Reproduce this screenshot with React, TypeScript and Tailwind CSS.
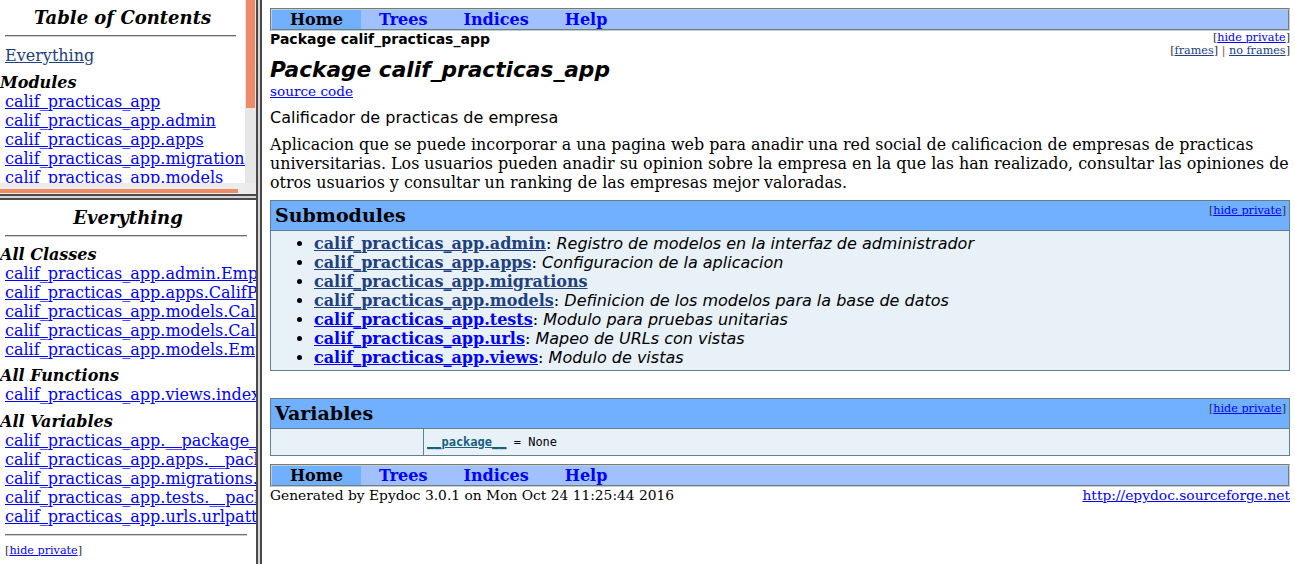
import React from "react";

const serif = "font-['DejaVu_Serif',serif]";

function Hr({ className = "" }: { className?: string }) {
  return <div className={"h-0 border-t border-b border-t-[#6e6e6e] border-b-[#cfcfcf] " + className} />;
}

function TocLink({ children, visited = false }: { children: React.ReactNode; visited?: boolean }) {
  return (
    <div className="whitespace-nowrap pl-[5px] text-[16px] leading-[19px]">
      <a className={visited ? "text-[#204080] underline" : "text-[#0000ff] underline"} href="#">
        {children}
      </a>
    </div>
  );
}

function TocHead({ children, className = "" }: { children: React.ReactNode; className?: string }) {
  return <div className={"whitespace-nowrap text-[16px] leading-[19px] font-bold italic " + className}>{children}</div>;
}

function NavBar() {
  return (
    <div className="flex border-2 [border-style:groove] border-[#c0d0d0] bg-[#a0c0ff] text-[16px] leading-[19px] font-bold">
      <div className="bg-[#70b0ff] px-[18px] text-black">Home</div>
      <div className="px-[18px] text-[#0000ff]">Trees</div>
      <div className="px-[18px] text-[#0000ff]">Indices</div>
      <div className="px-[18px] text-[#0000ff]">Help</div>
    </div>
  );
}

function Options({ children, className = "" }: { children: React.ReactNode; className?: string }) {
  return <div className={"whitespace-nowrap text-[11.2px] leading-[13px] text-[#333] " + className}>{children}</div>;
}

const submodules: { name: string; desc: string; visited: boolean }[] = [
  { name: "calif_practicas_app.admin", desc: "Registro de modelos en la interfaz de administrador", visited: true },
  { name: "calif_practicas_app.apps", desc: "Configuracion de la aplicacion", visited: true },
  { name: "calif_practicas_app.migrations", desc: "", visited: true },
  { name: "calif_practicas_app.models", desc: "Definicion de los modelos para la base de datos", visited: true },
  { name: "calif_practicas_app.tests", desc: "Modulo para pruebas unitarias", visited: false },
  { name: "calif_practicas_app.urls", desc: "Mapeo de URLs con vistas", visited: false },
  { name: "calif_practicas_app.views", desc: "Modulo de vistas", visited: false },
];

export default function App() {
  return (
    <div className={"flex h-[564px] w-[1295px] overflow-hidden bg-white text-black " + serif}>
      {/* Left column (two frames) */}
      <div className="flex w-[256px] shrink-0 flex-col">
        {/* Top-left frame: Table of contents */}
        <div className="relative h-[194px] shrink-0 overflow-hidden">
          <div className="w-[245px] pt-[7px]">
            <div className="text-center text-[18px] leading-[21px] font-bold italic">Table of Contents</div>
            <Hr className="ml-[5px] mr-[9px] mt-[7px] mb-[9px]" />
            <TocLink visited>Everything</TocLink>
            <TocHead className="mt-[8px]">Modules</TocHead>
            <TocLink>calif_practicas_app</TocLink>
            <TocLink>calif_practicas_app.admin</TocLink>
            <TocLink>calif_practicas_app.apps</TocLink>
            <TocLink>calif_practicas_app.migrations</TocLink>
            <TocLink>calif_practicas_app.models</TocLink>
            <TocLink>calif_practicas_app.tests</TocLink>
            <TocLink>calif_practicas_app.urls</TocLink>
            <TocLink>calif_practicas_app.views</TocLink>
          </div>
          {/* vertical scrollbar */}
          <div className="absolute right-0 top-0 h-[183px] w-[11px] bg-[#e6e6e6]">
            <div className="ml-[1px] h-[108px] w-[9px] bg-[#ee8a66]" />
          </div>
          {/* horizontal scrollbar */}
          <div className="absolute bottom-0 left-0 h-[11px] w-[245px] bg-[#ececec]">
            <div className="absolute bottom-[1px] left-0 h-[4px] w-[238px] bg-[#ee8a66]" />
          </div>
          <div className="absolute bottom-0 right-0 h-[11px] w-[11px] bg-[#ebebeb]" />
        </div>
        {/* horizontal frame divider */}
        <div className="h-[6px] shrink-0 border-t-2 border-b-2 border-[#4a4a4a] bg-[#d6d6d6]" />
        {/* Bottom-left frame: Everything */}
        <div className="flex-1 overflow-hidden pt-[7px]">
          <div className="text-center text-[18px] leading-[21px] font-bold italic">Everything</div>
          <Hr className="ml-[5px] mr-[9px] mt-[7px] mb-[8px]" />
          <TocHead className="mt-[1px]">All Classes</TocHead>
          <TocLink>calif_practicas_app.admin.EmpresaAdmin</TocLink>
          <TocLink>calif_practicas_app.apps.CalifPracticasAppConfig</TocLink>
          <TocLink>calif_practicas_app.models.Calificacion</TocLink>
          <TocLink>calif_practicas_app.models.Calificador</TocLink>
          <TocLink>calif_practicas_app.models.Empresa</TocLink>
          <TocHead className="mt-[7px]">All Functions</TocHead>
          <TocLink>calif_practicas_app.views.index</TocLink>
          <TocHead className="mt-[8px]">All Variables</TocHead>
          <TocLink>calif_practicas_app.__package__</TocLink>
          <TocLink>calif_practicas_app.apps.__package__</TocLink>
          <TocLink>calif_practicas_app.migrations.__package__</TocLink>
          <TocLink>calif_practicas_app.tests.__package__</TocLink>
          <TocLink>calif_practicas_app.urls.urlpatterns</TocLink>
          <Hr className="ml-[5px] mr-[9px] mt-[8px] mb-[8px]" />
          <Options className="pl-[5px]">
            [<a className="text-[#0000ff] underline" href="#">hide private</a>]
          </Options>
        </div>
      </div>

      {/* vertical frame divider */}
      <div className="w-[6px] shrink-0 border-l-2 border-r-2 border-[#4a4a4a] bg-[#d6d6d6]" />

      {/* Right frame */}
      <div className="min-w-0 flex-1 overflow-hidden pl-[8px] pr-[5px] pt-[8px]">
        <NavBar />
        <div className="flex items-start justify-between">
          <div className="whitespace-nowrap font-['DejaVu_Sans',sans-serif] text-[14px] leading-[17px] font-bold">
            Package calif_practicas_app
          </div>
          <div className="text-right">
            <Options>
              [<a className="text-[#0000ff] underline" href="#">hide private</a>]
            </Options>
            <Options>
              [<a className="text-[#204080] underline" href="#">frames</a>] <span className="text-[#8a5a30]">|</span>{" "}
              <a className="text-[#204080] underline" href="#">no frames</a>]
            </Options>
          </div>
        </div>
        <h1 className="whitespace-nowrap font-['DejaVu_Sans',sans-serif] text-[21.7px] leading-[26px] font-bold italic">
          Package calif_practicas_app
        </h1>
        <div className="text-[13.6px] leading-[16px]">
          <a className="text-[#0000ff] underline" href="#">source code</a>
        </div>
        <p className="mt-[9px] font-['DejaVu_Sans',sans-serif] text-[16px] leading-[19px]">
          Calificador de practicas de empresa
        </p>
        <p className="mt-[8px] whitespace-nowrap text-[15.9px] leading-[19px]">
          Aplicacion que se puede incorporar a una pagina web para anadir una red social de calificacion de empresas de practicas
          <br />
          universitarias. Los usuarios pueden anadir su opinion sobre la empresa en la que las han realizado, consultar las opiniones de
          <br />
          otros usuarios y consultar un ranking de las empresas mejor valoradas.
        </p>

        {/* Submodules */}
        <div className="mt-[8px] border border-[#608090] bg-[#e8f0f8]">
          <div className="flex h-[30px] items-start justify-between border-b border-[#608090] bg-[#70b0ff]">
            <div className="pl-[4px] pt-[2px] text-[19px] leading-[25px] font-bold">Submodules</div>
            <Options className="pr-[3px] pt-[3px]">
              [<a className="text-[#0000ff] underline" href="#">hide private</a>]
            </Options>
          </div>
          <ul className="list-disc pb-[3px] pl-[43px] pt-[3px] text-[16px] leading-[19px]">
            {submodules.map((m) => (
              <li key={m.name} className="whitespace-nowrap">
                <a className={m.visited ? "font-bold text-[#204080] underline" : "font-bold text-[#0000ff] underline"} href="#">
                  {m.name}
                </a>
                {m.desc ? (
                  <>
                    :{" "}
                    <span className="font-['DejaVu_Sans',sans-serif] italic">{m.desc}</span>
                  </>
                ) : null}
              </li>
            ))}
          </ul>
        </div>

        {/* Variables */}
        <div className="mt-[27px] border border-[#608090] bg-[#e8f0f8]">
          <div className="flex h-[30px] items-start justify-between border-b border-[#608090] bg-[#70b0ff]">
            <div className="pl-[4px] pt-[2px] text-[19px] leading-[25px] font-bold">Variables</div>
            <Options className="pr-[3px] pt-[3px]">
              [<a className="text-[#0000ff] underline" href="#">hide private</a>]
            </Options>
          </div>
          <div className="flex h-[26px]">
            <div className="w-[153px] shrink-0 border-r border-[#608090]" />
            <div className="flex items-center pl-[3px] font-['DejaVu_Sans_Mono',monospace] text-[12px] leading-[14px]">
              <span className="font-bold text-[#16607e] underline">__package__</span>
              <span className="whitespace-pre"> = None</span>
            </div>
          </div>
        </div>

        <div className="mt-[8px]">
          <NavBar />
        </div>
        <div className="flex justify-between text-[13.8px] leading-[17px]">
          <span>Generated by Epydoc 3.0.1 on Mon Oct 24 11:25:44 2016</span>
          <a className="text-[#0000ff] underline" href="#">http://epydoc.sourceforge.net</a>
        </div>
      </div>
    </div>
  );
}
